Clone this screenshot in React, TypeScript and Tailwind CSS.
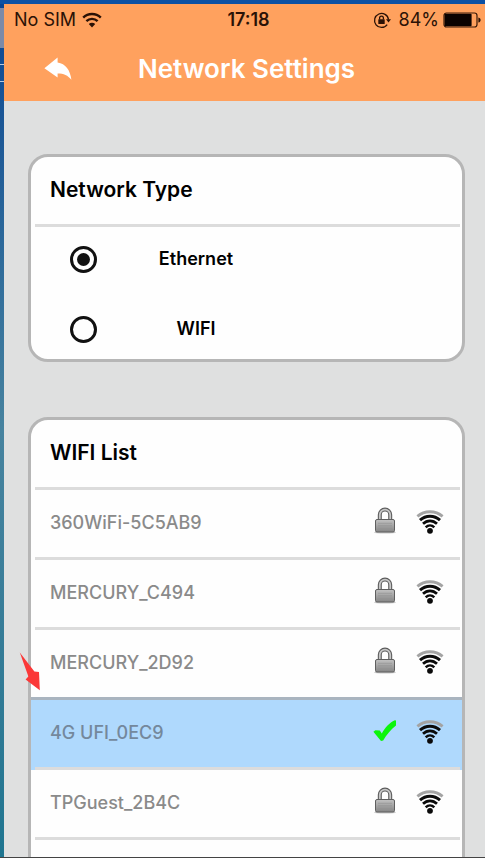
import { useState } from "react";

interface Network {
    name: string;
    locked: boolean;
}

const networks: Network[] = [
    { name: "360WiFi-5C5AB9", locked: true },
    { name: "MERCURY_C494", locked: true },
    { name: "MERCURY_2D92", locked: true },
    { name: "4G UFI_0EC9", locked: false },
    { name: "TPGuest_2B4C", locked: true },
];

const StatusWifi = () => (
    <svg className="h-4 w-5" viewBox="0 0 20 16" fill="none" stroke="#2b1206" strokeWidth="2.4">
        <path d="M1.2 5.6a12.6 12.6 0 0 1 17.6 0" />
        <path d="M4.4 9.2a8 8 0 0 1 11.2 0" />
        <path d="M10 15.4 6.8 12a4.6 4.6 0 0 1 6.4 0z" fill="#2b1206" stroke="none" />
    </svg>
);

const RotationLock = () => (
    <svg className="h-[18px] w-[18px]" viewBox="0 0 18 18" fill="none" stroke="#2b1206" strokeWidth="1.3">
        <path d="M14.2 13.6A7 7 0 1 1 15.5 8.6" />
        <path d="M13 8.3h5l-2.5 3.2z" fill="#2b1206" stroke="none" />
        <rect x="5.3" y="8.2" width="6.4" height="4.8" rx="0.6" fill="#2b1206" stroke="none" />
        <path d="M6.6 8.4V7a1.9 1.9 0 0 1 3.8 0v1.4" />
    </svg>
);

const Battery = () => (
    <svg className="h-4 w-[38px]" viewBox="0 0 38 16" fill="none">
        <rect x="1" y="1" width="33" height="14" rx="2.5" stroke="#3a1a08" strokeWidth="1.2" />
        <rect x="1.6" y="1.8" width="27" height="12.4" rx="1" fill="#0b0301" />
        <path d="M35.4 5.4c1.7.5 2.2 1.4 2.2 2.6s-.5 2.1-2.2 2.6z" fill="#2b1206" />
    </svg>
);

const BackArrow = () => (
    <svg className="h-6 w-7" viewBox="0 0 28 24" fill="#fff">
        <path d="M.4 11.2 13.6.6v4.8c8 1.2 12.600 7.400 13.800 17.400-3.600-4.600-7.600-6.400-13.800-6.400v4.200z" />
    </svg>
);

const SignalIcon = () => (
    <svg className="h-6 w-7" viewBox="0 0 28 24" fill="none">
        <path d="M1.400 6.400c7.200-6.200 18-6.200 25.200 0" stroke="#a3a3a3" strokeWidth="2.8" />
        <path d="M4 10.200c5.800-5.200 14.200-5.200 20 0" stroke="#0a0a0a" strokeWidth="3" />
        <path d="M7 13.800c4.100-4 9.900-4 14 0" stroke="#0a0a0a" strokeWidth="2.7" />
        <path d="M9.700 17.400c2.500-2.700 6.100-2.700 8.600 0" stroke="#0a0a0a" strokeWidth="2.4" />
        <circle cx="14" cy="20.8" r="2.9" fill="#0a0a0a" />
    </svg>
);

const LockIcon = () => (
    <svg className="h-[27px] w-6" viewBox="0 0 24 27" fill="none">
        <defs>
            <linearGradient id="lockBody" x1="0" y1="0" x2="0" y2="1">
                <stop offset="0" stopColor="#c2c2c2" />
                <stop offset="1" stopColor="#858585" />
            </linearGradient>
        </defs>
        <ellipse cx="12" cy="25.4" rx="11" ry="1.2" fill="#c9c9c9" />
        <path d="M6.8 13V7.8a5.2 5.2 0 0 1 10.4 0V13" stroke="#5c5c5c" strokeWidth="4" />
        <path d="M6.8 13V7.8a5.2 5.2 0 0 1 10.4 0V13" stroke="#c8c8c8" strokeWidth="1.8" />
        <rect x="2.5" y="12.5" width="19" height="12.5" rx="1.5" fill="url(#lockBody)" stroke="#5f5f5f" />
        <path d="M5 16.3h14M5 18.8h14M5 21.3h14" stroke="#8f8f8f" strokeWidth=".6" />
    </svg>
);

const CheckIcon = () => (
    <svg className="h-[27px] w-6" viewBox="0 0 24 27">
        <path d="M.4 14.800 2.400 13.200 6.800 13.400 8.800 16.600C12.200 10 16.400 5.800 21.800 3.200L23 3.600V8.400C17.600 12.400 13.600 17.800 10.200 23.400L8 24z" fill="#0cf50c" />
    </svg>
);

export default function App() {
    const [type, setType] = useState("Ethernet");
    const [selected, setSelected] = useState("4G UFI_0EC9");

    return (
        <div className="relative flex h-screen flex-col overflow-hidden border-t-4 border-b border-t-[#0c51a4] border-b-[#444] bg-[#0c51a4] font-['Inter',sans-serif]">
            <div className="flex min-h-0 flex-1 bg-linear-to-b from-[#0a4592] via-[#47839f] to-[#1f7590]">
                <div className="w-1 shrink-0">
                    <div className="mt-1 h-10 bg-[#7d8aa8]" />
                    <div className="mt-4 h-px bg-white/70" />
                    <div className="mt-4 h-px bg-white/70" />
                </div>
                <div className="flex min-w-0 flex-1 flex-col bg-[#dfe0e0]">
                    <header className="shrink-0 bg-[#ffa15e] text-[#2b1206]">
                        <div className="grid h-8 grid-cols-[1fr_auto_1fr] items-center pr-1 pl-[10px] text-lg leading-8">
                            <div className="flex items-center gap-1.5">
                                <span>No SIM</span>
                                <StatusWifi />
                            </div>
                            <span className="pl-0.5 font-semibold">17:18</span>
                            <div className="flex items-center justify-end gap-1">
                                <RotationLock />
                                <span className="ml-1">84%</span>
                                <Battery />
                            </div>
                        </div>
                        <div className="grid h-[65px] grid-cols-[1fr_auto_1fr] items-center pl-10 pr-9">
                            <button aria-label="Back" className="justify-self-start">
                                <BackArrow />
                            </button>
                            <h1 className="text-[26px] font-semibold text-white">Network Settings</h1>
                        </div>
                    </header>

                    <main className="min-h-0 flex-1 overflow-hidden pt-[53px] pr-5 pl-6">
                        <section className="rounded-[20px] border-3 border-[#b6b6b6] bg-[#fefefe]">
                            <h2 className="mr-0.5 ml-1 flex h-[70px] items-center border-b-3 border-[#dcdcdc] pb-0.5 pl-[15px] text-[21px] font-semibold">Network Type</h2>
                            <div className="flex flex-col gap-[30px] pt-3 pb-[10px]">
                                {["Ethernet", "WIFI"].map((item) => (
                                    <label key={item} className="flex h-10 items-center pl-[39px] text-lg font-semibold">
                                        <input
                                            type="radio"
                                            name="networkType"
                                            checked={type === item}
                                            onChange={() => setType(item)}
                                            className="h-[27px] w-[27px] appearance-none rounded-full border-3 border-[#111] bg-clip-content p-1 checked:bg-[#111]"
                                        />
                                        <span className="w-[198px] text-center">{item}</span>
                                    </label>
                                ))}
                            </div>
                        </section>

                        <section className="relative mt-[55px] rounded-[20px] border-3 border-[#b6b6b6] bg-[#fefefe]">
                            <h2 className="mr-0.5 ml-1 flex h-[70px] items-center border-b-3 border-[#dcdcdc] pb-0.5 pl-[15px] text-[21px] font-semibold">WIFI List</h2>
                            <ul>
                                {networks.map((item) => {
                                    const active = selected === item.name;
                                    return (
                                        <li key={item.name} className={active ? "relative -mt-[3px] border-t-3 border-[#a9b4bf] bg-[#afd9fd]" : ""}>
                                            <button
                                                onClick={() => setSelected(item.name)}
                                                className={
                                                    "flex h-[70px] w-full items-center pr-0.5 pl-1 text-lg font-medium " +
                                                    (active ? "text-[#74889c]" : "text-[#8a8a8a]")
                                                }
                                            >
                                                <span className="flex h-full w-full items-center border-b-3 border-[#dcdcdc] pr-4 pb-0.5 pl-[15px]">
                                                    <span className="flex-1 text-left">{item.name}</span>
                                                    <span className="mr-[19px] pb-1">{item.locked ? <LockIcon /> : <CheckIcon />}</span>
                                                    <span className="pb-0.5">
                                                        <SignalIcon />
                                                    </span>
                                                </span>
                                            </button>
                                        </li>
                                    );
                                })}
                            </ul>
                            <div className="h-[70px]" />
                            <svg className="absolute top-[232px] -left-3 h-10 w-6" viewBox="0 0 24 40" fill="#fb3838">
                                <path d="M.8.5 15.4 19.4 20 20 20.8 38.2 6.6 27.4 9.4 24.4z" />
                            </svg>
                        </section>
                    </main>
                </div>
            </div>
        </div>
    );
}
